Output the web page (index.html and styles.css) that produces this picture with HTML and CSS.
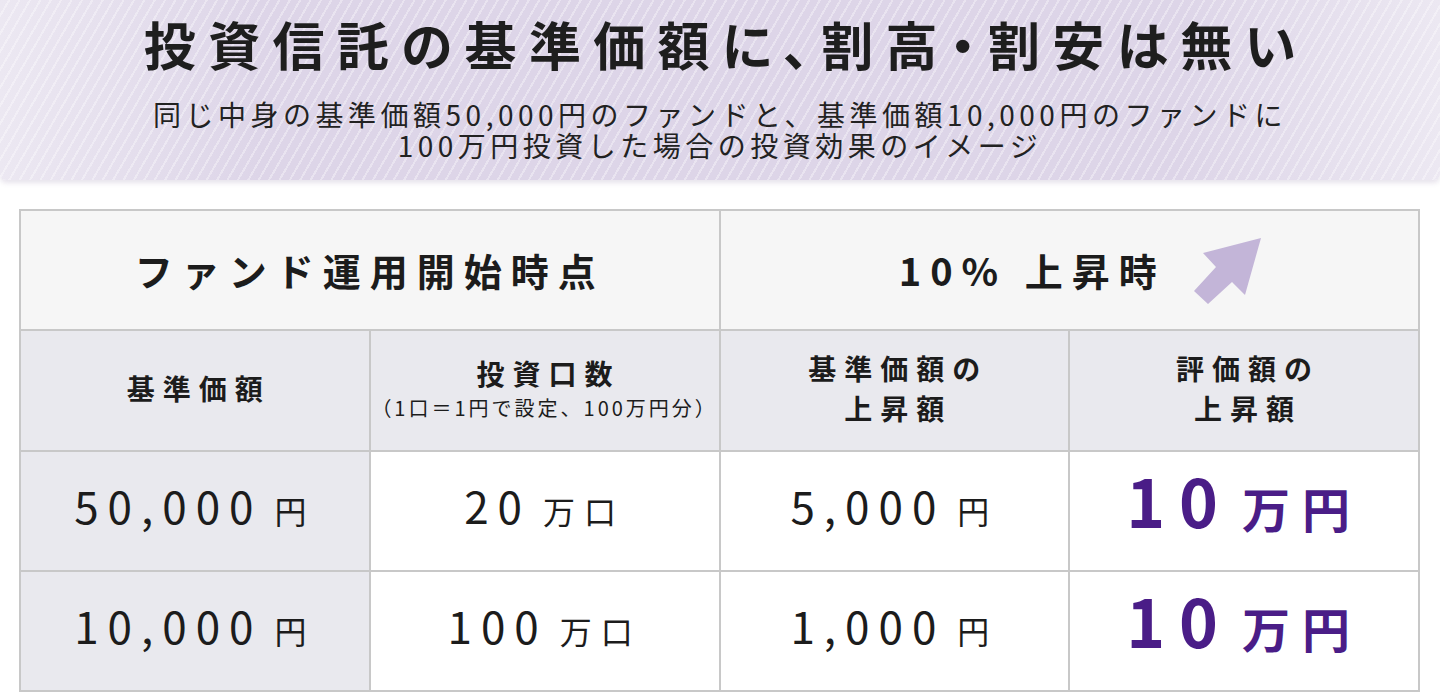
FILE: index.html
```html
<!DOCTYPE html>
<html lang="ja">
<head>
<meta charset="utf-8">
<link rel="stylesheet" href="styles.css">
</head>
<body>
<header class="banner">
  <h1 class="title">投資信託の基準価額に、割高・割安は無い</h1>
  <p class="lead">同じ中身の基準価額50,000円のファンドと、基準価額10,000円のファンドに</p>
  <p class="lead">100万円投資した場合の投資効果のイメージ</p>
</header>
<main class="wrap">
  <table class="cmp">
    <tr class="r-head">
      <th colspan="2" class="h-big">ファンド運用開始時点</th>
      <th colspan="2" class="h-big"><span class="h-rise">10% 上昇時<svg class="arrow" width="72" height="72" viewBox="0 0 72 72"><polygon points="69,2 11,17 24,31 2,55 16,68 40,46 53,59" fill="#c3b5d8"/></svg></span></th>
    </tr>
    <tr class="r-sub">
      <th>基準価額</th>
      <th>投資口数<span class="note">（1口＝1円で設定、100万円分）</span></th>
      <th>基準価額の<br>上昇額</th>
      <th>評価額の<br>上昇額</th>
    </tr>
    <tr class="r-data">
      <td class="first"><span class="num">50,000</span><span class="unit">円</span></td>
      <td><span class="num">20</span><span class="unit">万口</span></td>
      <td><span class="num">5,000</span><span class="unit">円</span></td>
      <td class="hl"><span class="num">10</span><span class="unit">万円</span></td>
    </tr>
    <tr class="r-data">
      <td class="first"><span class="num">10,000</span><span class="unit">円</span></td>
      <td><span class="num">100</span><span class="unit">万口</span></td>
      <td><span class="num">1,000</span><span class="unit">円</span></td>
      <td class="hl"><span class="num">10</span><span class="unit">万円</span></td>
    </tr>
  </table>
</main>
</body>
</html>
```

FILE: styles.css
```css
* { box-sizing: border-box; }
html, body { margin: 0; padding: 0; background: #ffffff; }
body {
  font-family: "Noto Sans CJK JP", "Noto Sans", sans-serif;
  color: #1c1c1c;
  width: 1440px;
  height: 700px;
  overflow: hidden;
}
.banner {
  height: 180px;
  border-radius: 0 0 6px 6px;
  background:
    repeating-linear-gradient(120deg, rgba(255,255,255,0) 0 7px, rgba(255,255,255,0.35) 7px 9px),
    linear-gradient(90deg, #ece8f2 0%, #ddd5e8 18%, #ddd5e8 82%, #ece8f2 100%);
  box-shadow: 0 3px 5px rgba(120, 100, 150, 0.18);
  text-align: center;
  padding-top: 14px;
}
.title {
  margin: 0;
  font-size: 52px;
  line-height: 60px;
  font-weight: 700;
  letter-spacing: 12.3px;
  padding-left: 12px;
  font-feature-settings: "palt";
  color: #1e1e1e;
}
.lead {
  margin: 0;
  font-size: 28px;
  line-height: 31px;
  font-weight: 400;
  letter-spacing: 4.5px;
  color: #222;
}
.title + .lead { margin-top: 25px; }
.wrap {
  padding: 29px 20px 0 19px;
}
.cmp {
  width: 1401px;
  border-collapse: collapse;
  table-layout: fixed;
  text-align: center;
}
.cmp th, .cmp td {
  border: 2px solid #c8c8c8;
  padding: 0;
  vertical-align: middle;
}
.r-head th {
  height: 120px;
  background: #f6f6f6;
  font-size: 38px;
  font-weight: 700;
  letter-spacing: 9px;
  padding-bottom: 2px;
}
.h-rise {
  display: inline-flex;
  align-items: center;
  gap: 26px;
  padding-left: 24px;
}
.h-rise .arrow { display: block; margin-top: 6px; }
.r-sub th {
  height: 121px;
  background: #e9e9ee;
  font-size: 28px;
  line-height: 40px;
  font-weight: 700;
  letter-spacing: 8px;
  padding-left: 8px;
  padding-bottom: 6px;
}
.note {
  display: block;
  font-size: 20px;
  line-height: 30px;
  font-weight: 400;
  letter-spacing: 3px;
  margin-left: -8px;
}
.r-data td {
  height: 120px;
  line-height: 1;
  background: #ffffff;
  padding-bottom: 12px;
}
.r-data td.first { background: #e9e9ee; }
.r-data td.hl { padding-bottom: 24px; }
.num {
  font-size: 44px;
  letter-spacing: 9px;
  font-weight: 400;
}
.unit {
  font-size: 32px;
  letter-spacing: 9px;
  font-weight: 400;
  margin-left: 12px;
}
.hl { color: #4a1d87; }
.hl .num { font-size: 66px; font-weight: 700; letter-spacing: 14px; }
.hl .unit { font-size: 48px; font-weight: 700; letter-spacing: 12px; margin-left: 10px; }
```
